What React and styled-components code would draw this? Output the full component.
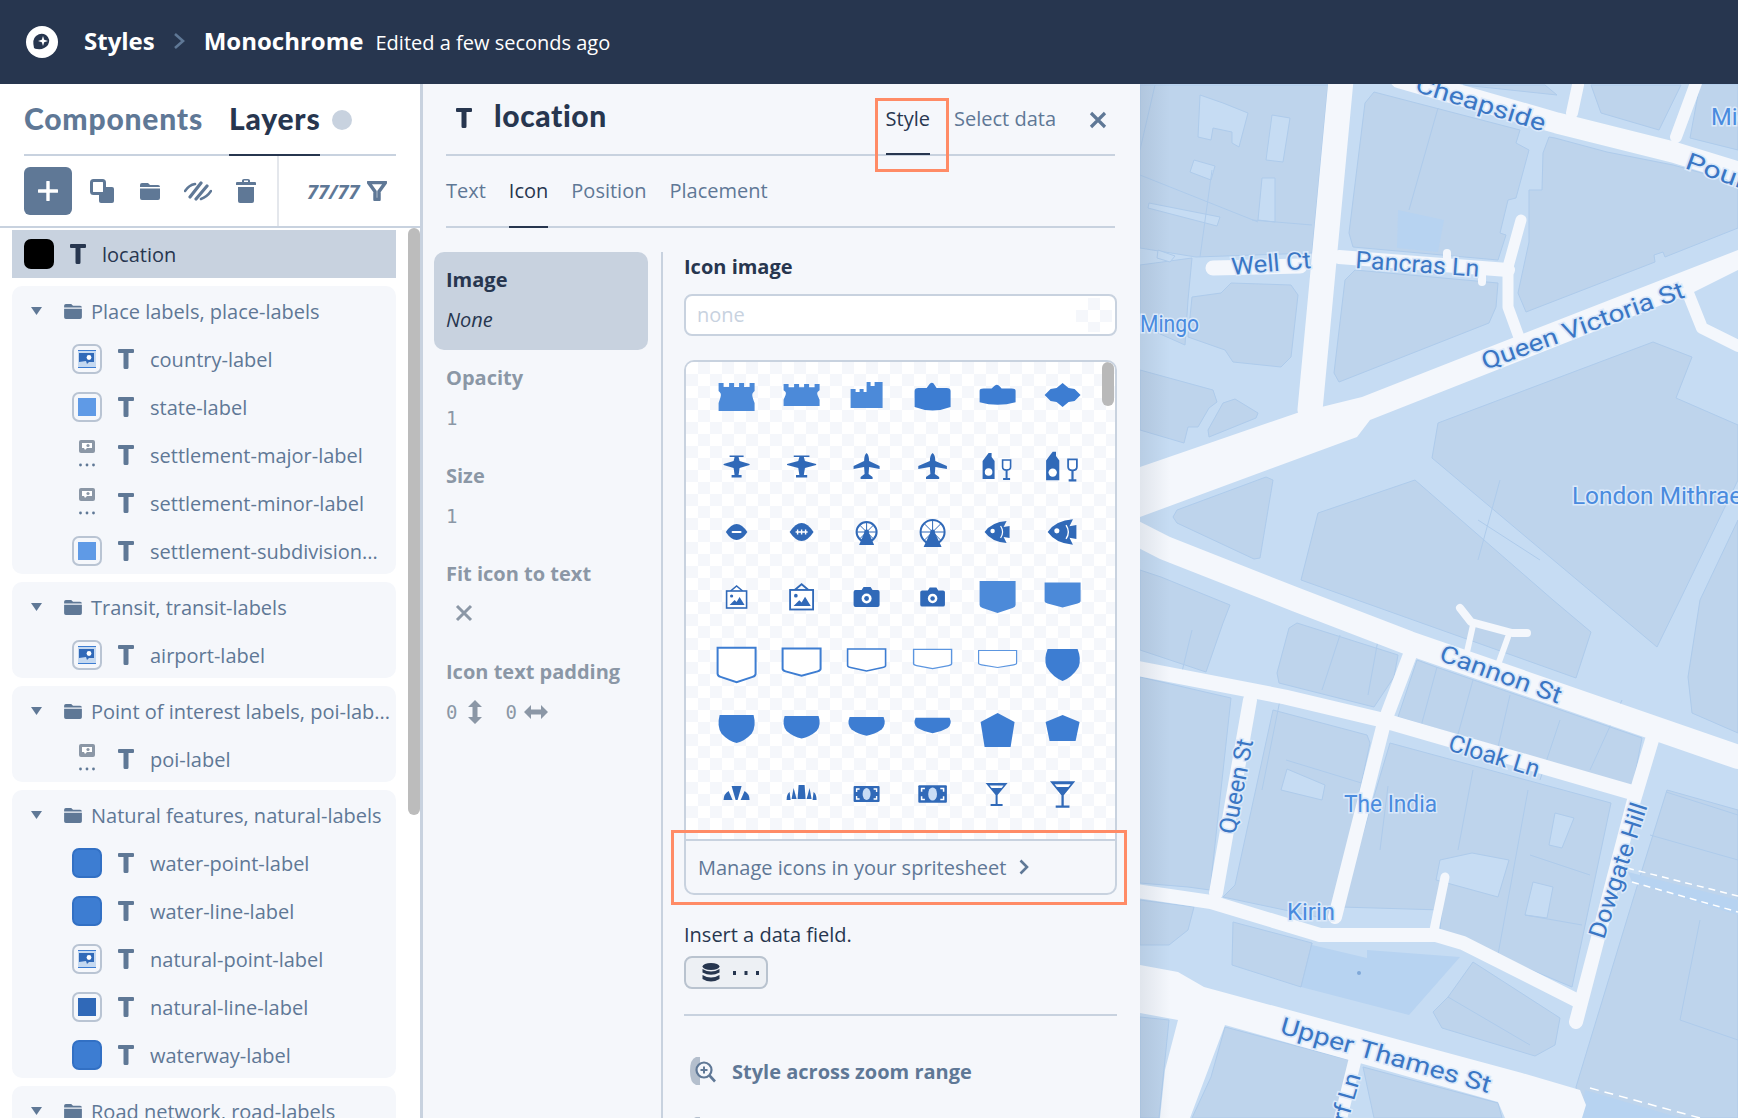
import styled, { createGlobalStyle } from "styled-components";

const GlobalStyle = createGlobalStyle`
  html, body {
    margin: 0;
    padding: 0;
    height: 100%;
    overflow: hidden;
    font-family: "Open Sans", "Liberation Sans", sans-serif;
  }
  * { box-sizing: border-box; }
`;

const NAVY = "#27364f";
const SLATE = "#5f7896";
const LINE = "#c8d2df";
const PANEL = "#f5f7fb";
const GREY = "#8b97a6";
const BLUE = "#3d7dd2";
const DEEP = "#3069b8";
const SOFT = "#4c8ad9";

const Page = styled.div`
  display: flex;
  flex-direction: column;
  width: 1738px;
  height: 1118px;
  overflow: hidden;
`;

const TopBar = styled.header`
  display: flex;
  align-items: center;
  flex: 0 0 84px;
  padding-left: 26px;
  background: ${NAVY};
  color: #fff;
`;

const Crumb = styled.span`
  font-size: 24px;
  font-weight: 700;
  margin-left: ${(p) => p.$left || 0}px;
  margin-bottom: 4px;
`;

const Edited = styled.span`
  font-size: 20px;
  margin-left: 12px;
`;

const Glyph = styled.svg`
  display: block;
  flex: none;
  margin: ${(p) => p.$m || 0};
`;

const Body = styled.div`
  display: flex;
  flex: 1;
  min-height: 0;
`;

const Sidebar = styled.aside`
  position: relative;
  flex: 0 0 423px;
  background: #fff;
  border-right: 3px solid ${LINE};
  overflow: hidden;
`;

const TabRow = styled.div`
  display: flex;
  align-items: center;
  height: 72px;
  margin: 0 24px;
  border-bottom: 2px solid ${LINE};
`;

const BigTab = styled.div`
  display: flex;
  align-items: center;
  height: 72px;
  margin-top: 2px;
  margin-right: ${(p) => p.$gap || 0}px;
  padding-bottom: 3px;
  font-family: "Lato", sans-serif;
  font-size: 30px;
  font-weight: 900;
  letter-spacing: 0.8px;
  color: ${(p) => (p.$active ? NAVY : SLATE)};
  border-bottom: 2px solid ${(p) => (p.$active ? NAVY : "transparent")};
`;

const Dot = styled.span`
  width: 20px;
  height: 20px;
  margin: 2px 0 0 12px;
  border-radius: 50%;
  background: ${LINE};
`;

const Toolbar = styled.div`
  display: flex;
  align-items: center;
  height: 72px;
  border-bottom: 2px solid ${LINE};
`;

const AddButton = styled.div`
  display: flex;
  align-items: center;
  justify-content: center;
  width: 48px;
  height: 48px;
  margin: 0 18px 0 24px;
  border-radius: 6px;
  background: ${SLATE};
`;

const Count = styled.div`
  display: flex;
  align-items: center;
  gap: 8px;
  height: 70px;
  margin-left: 21px;
  padding-left: 28px;
  border-left: 2px solid #e4e7ec;
  font-size: 20px;
  font-weight: 700;
  font-style: italic;
  color: ${SLATE};
`;

const LayerList = styled.div`
  display: flex;
  flex-direction: column;
  gap: 8px;
  width: 384px;
  margin: 2px 0 0 12px;
`;

const SelectedRow = styled.div`
  display: flex;
  align-items: center;
  height: 48px;
  padding-left: 12px;
  background: ${LINE};
  color: ${NAVY};
  font-size: 20px;
`;

const Group = styled.section`
  border-radius: 10px;
  background: ${PANEL};
`;

const GroupHead = styled.div`
  display: flex;
  align-items: center;
  height: 48px;
  padding: 2px 0 0 19px;
  font-size: 20px;
  color: ${SLATE};
  white-space: nowrap;
`;

const Row = styled.div`
  display: flex;
  align-items: center;
  height: 48px;
  padding: 2px 0 0 60px;
  font-size: 20px;
  color: ${SLATE};
  white-space: nowrap;
`;

const SwatchBox = styled.div`
  display: flex;
  align-items: center;
  justify-content: center;
  flex: none;
  width: 30px;
  height: 30px;
  border-radius: 7px;
  border: 2px solid ${(p) => p.$line};
  background: ${(p) => p.$fill};
`;

const SwatchInner = styled.div`
  width: 18px;
  height: 18px;
  background: ${(p) => p.$fill};
`;

const Scroll = styled.div`
  position: absolute;
  left: 408px;
  top: 144px;
  width: 12px;
  height: 587px;
  border-radius: 6px;
  background: #bcbcbc;
`;

const Panel = styled.main`
  position: relative;
  flex: 0 0 717px;
  background: ${PANEL};
  overflow: hidden;
`;

const PanelHead = styled.div`
  display: flex;
  align-items: center;
  height: 72px;
  margin: 0 25px 0 23px;
  border-bottom: 2px solid ${LINE};
`;

const LayerName = styled.div`
  flex: 1;
  margin: -8px 0 0 22px;
  font-family: "Lato", sans-serif;
  font-size: 30px;
  font-weight: 900;
  letter-spacing: 0.6px;
  color: ${NAVY};
`;

const HeadTab = styled.div`
  display: flex;
  align-items: center;
  height: 70px;
  margin: 2px ${(p) => p.$gap}px 0 0;
  font-size: 20px;
  padding-bottom: 2px;
  color: ${(p) => (p.$active ? NAVY : SLATE)};
  border-bottom: 2px solid ${(p) => (p.$active ? NAVY : "transparent")};
`;

const SubTabs = styled.div`
  display: flex;
  gap: 23px;
  height: 72px;
  margin: 0 25px 0 23px;
  border-bottom: 2px solid ${LINE};
`;

const SubTab = styled.div`
  display: flex;
  align-items: center;
  height: 72px;
  padding-bottom: 2px;
  font-size: 20px;
  color: ${(p) => (p.$active ? NAVY : SLATE)};
  border-bottom: 2px solid ${(p) => (p.$active ? NAVY : "transparent")};
`;

const Columns = styled.div`
  display: flex;
  margin-top: 24px;
`;

const Props = styled.div`
  flex: 0 0 214px;
  margin: 0 13px 0 11px;
`;

const Prop = styled.div`
  height: 98px;
  padding: 14px 12px 0;
  border-radius: 10px;
  background: ${(p) => (p.$active ? LINE : "transparent")};
  color: ${(p) => (p.$active ? NAVY : GREY)};
`;

const PropName = styled.div`
  font-size: 20px;
  font-weight: 700;
  line-height: 27px;
  margin-bottom: 13px;
  white-space: nowrap;
`;

const PropValue = styled.div`
  display: flex;
  align-items: center;
  height: 27px;
  font-family: ${(p) => (p.$italic ? `"Open Sans", sans-serif` : `"DejaVu Sans Mono", monospace`)};
  font-size: ${(p) => (p.$italic ? 20 : 19)}px;
  font-style: ${(p) => (p.$italic ? "italic" : "normal")};
`;

const Editor = styled.div`
  flex: 1;
  height: 900px;
  padding: 0 23px 0 21px;
  border-left: 2px solid ${LINE};
`;

const EditorTitle = styled.div`
  font-size: 20px;
  font-weight: 700;
  line-height: 30px;
  color: ${NAVY};
`;

const Field = styled.div`
  position: relative;
  height: 42px;
  margin-top: 12px;
  padding-left: 11px;
  border: 2px solid ${LINE};
  border-radius: 8px;
  background: #fff;
  font-size: 20px;
  line-height: 38px;
  color: ${LINE};
`;

const Checker = styled.div`
  position: absolute;
  right: 3px;
  top: 2px;
  width: 36px;
  height: 34px;
  background: repeating-conic-gradient(${PANEL} 0 25%, #fff 0 50%) 0 0 / 24px 24px;
`;

const Sprites = styled.div`
  position: relative;
  height: 535px;
  margin-top: 24px;
  border: 2px solid ${LINE};
  border-radius: 10px;
  overflow: hidden;
`;

const SpriteGrid = styled.div`
  display: grid;
  grid-template-columns: repeat(6, 65.2px);
  grid-auto-rows: 66px;
  align-content: start;
  height: 477px;
  padding: 5px 0 0 18px;
  background: repeating-conic-gradient(${PANEL} 0 25%, #fff 0 50%) 0 0 / 24px 24px;
`;

const SpriteThumb = styled.div`
  position: absolute;
  right: 1px;
  top: 0;
  width: 12px;
  height: 44px;
  border-radius: 6px;
  background: #b9b9b9;
`;

const Manage = styled.div`
  display: flex;
  align-items: center;
  gap: 13px;
  height: 54px;
  padding-left: 12px;
  border-top: 2px solid ${LINE};
  font-size: 20px;
  color: ${SLATE};
`;

const Hint = styled.div`
  margin-top: 26px;
  font-size: 20px;
  line-height: 28px;
  color: ${NAVY};
`;

const DataButton = styled.div`
  display: flex;
  align-items: center;
  gap: 12px;
  width: 84px;
  height: 33px;
  margin-top: 7px;
  padding-left: 16px;
  border: 2px solid #b9c3cf;
  border-radius: 8px;
  background: #edf0f4;
`;

const Rule = styled.div`
  height: 2px;
  margin-top: 25px;
  background: ${LINE};
`;

const ZoomRow = styled.div`
  display: flex;
  align-items: center;
  gap: 16px;
  height: 30px;
  margin-top: ${(p) => p.$top}px;
  padding-left: 6px;
  font-size: 20px;
  font-weight: 700;
  color: ${SLATE};
`;

const Highlight = styled.div`
  position: absolute;
  left: ${(p) => p.$x}px;
  top: ${(p) => p.$y}px;
  width: ${(p) => p.$w}px;
  height: ${(p) => p.$h}px;
  border: 3px solid #ff8b66;
`;

const MapCanvas = styled.svg`
  display: block;
  flex: 1;
  height: 1034px;
  background: #c6dcf3;
`;

const MapLabel = styled.text`
  font-family: "Roboto", "Liberation Sans", sans-serif;
  font-size: 24px;
  fill: ${(p) => (p.$poi ? "#4a8bde" : "#3a76c4")};
  stroke: #dbe9fa;
  stroke-width: 3px;
  paint-order: stroke;
`;

const Logo = () => (
  <svg width="32" height="32" viewBox="0 0 32 32">
    <circle cx="16" cy="16" r="16" fill="#fff" />
    <path d="M8 22 Q6 13 10 10 Q15 6 20 9 Q25 13 22 19 Q18 24 11 23 Q9 23 8 22Z" fill={NAVY} />
    <path d="M17 10 L18.2 13.8 L22 15 L18.2 16.2 L17 20 L15.8 16.2 L12 15 L15.8 13.8Z" fill="#fff" />
  </svg>
);

const Folder = () => (
  <Glyph $m="0 9px 0 22px" width="18" height="16" viewBox="0 0 20 18">
    <path d="M0 3 Q0 1 2 1 H8 L10 3 H18 Q20 3 20 5 H0Z M0 6.5 H20 V16 Q20 18 18 18 H2 Q0 18 0 16Z" fill={SLATE} />
  </Glyph>
);

const Caret = () => (
  <svg width="11" height="8" viewBox="0 0 11 8">
    <path d="M0 0 H11 L5.5 8Z" fill={SLATE} />
  </svg>
);

const tPath = "M1 0 H15 Q16 0 16 1 V3 Q16 4 15 4 H10.5 V18.5 Q10.5 20 9 20 H7 Q5.5 20 5.5 18.5 V4 H1 Q0 4 0 3 V1 Q0 0 1 0Z";

const T = ({ color = SLATE }) => (
  <Glyph $m="0 16px" width="16" height="20" viewBox="0 0 16 20">
    <path d={tPath} fill={color} />
  </Glyph>
);

const Swatch = ({ kind }) => {
  if (kind === "solid") return <SwatchBox $line="#3270c4" $fill={BLUE} />;
  if (kind === "black") return <SwatchBox $line="#000" $fill="#000" />;
  if (kind === "light") return <SwatchBox $line="#b9c4d3" $fill={PANEL}><SwatchInner $fill="#5f9ae6" /></SwatchBox>;
  if (kind === "dark") return <SwatchBox $line="#b9c4d3" $fill={PANEL}><SwatchInner $fill={DEEP} /></SwatchBox>;
  if (kind === "pic") {
    return (
      <SwatchBox $line="#b9c4d3" $fill={PANEL}>
        <svg width="18" height="18" viewBox="0 0 18 18">
          <rect width="18" height="18" fill="#c5d9f1" />
          <path d="M0 .5H18M0 17.5H18" stroke="#3d7dd2" />
          <path d="M1 3 H16 V12 H11 L9 14 L8 11 L1 12Z" fill={DEEP} />
          <circle cx="11" cy="7.5" r="2.4" fill="#fff" />
        </svg>
      </SwatchBox>
    );
  }
  return (
    <svg width="30" height="30" viewBox="0 0 30 30">
      <rect x="7" y="0" width="16" height="13" rx="2" fill={GREY} />
      <path d="M10 3 H20 V8 H15 L13 10 L12 8 H10Z" fill="#fff" />
      <circle cx="16" cy="5.5" r="1.6" fill={GREY} />
      <circle cx="8.5" cy="25" r="1.4" fill={SLATE} />
      <circle cx="15" cy="25" r="1.4" fill={SLATE} />
      <circle cx="21.5" cy="25" r="1.4" fill={SLATE} />
    </svg>
  );
};

const groups = [
  {
    name: "Place labels, place-labels",
    rows: [
      ["pic", "country-label"],
      ["light", "state-label"],
      ["ghost", "settlement-major-label"],
      ["ghost", "settlement-minor-label"],
      ["light", "settlement-subdivision..."],
    ],
  },
  { name: "Transit, transit-labels", rows: [["pic", "airport-label"]] },
  { name: "Point of interest labels, poi-lab...", rows: [["ghost", "poi-label"]] },
  {
    name: "Natural features, natural-labels",
    rows: [
      ["solid", "water-point-label"],
      ["solid", "water-line-label"],
      ["pic", "natural-point-label"],
      ["dark", "natural-line-label"],
      ["solid", "waterway-label"],
    ],
  },
  { name: "Road network, road-labels", rows: [] },
];

const castle = "M-18-14h5v4h5.5v-4h5v4h5v-4h5v4h5.5v-4h5V-6C14-3 16 0 18 6V14H-18V6C-16 0-14-3-18-6Z";
const tower = "M-16-6h5v3h4v-3h4v3h3V-13h4v4h4v-4h8V13H-16Z";
const banner = "M-18-6Q-18-9-14-9H-6L-3-13Q0-16 2-12L4-9H14Q18-9 18-6V10Q0 17-18 10Z";
const lozenge = "M-18 0L-12-6-6-7 0-12 6-7 12-6 18 0 12 6 6 7 0 12-6 7-12 6Z";
const oldPlane = "M-13-2L-3-5-2-9H-7V-10.5H7V-9H2L3-5 13-2V-1L3 2 2 9H5V11.5H-5V9H-2L-3 2-13-1Z";
const jet = "M0-13Q2.5-11 2.5-5L13 0V3L2.5 1 2 8 6 11V13H-6V11L-2 8-2.5 1-13 3V0L-2.5-5Q-2.5-11 0-13Z";
const ball = "M-12 0Q-6-9 0-9 6-9 12 0 6 9 0 9-6 9-12 0Z";
const fish = "M-13 0Q-6-10 9-11L6-5 12-6V6L6 5 9 11Q-6 10-13 0Z";
const shield = "M-18-16H18V8Q18 10 15 11L0 16-15 11Q-18 10-18 8Z";
const round = "M-15-16H15Q19-6 16 2 10 12 0 16-10 12-16 2-19-6-15-16Z";
const wide = "M-17-16H17Q20-4 15 4 8 12 0 14-8 12-15 4-20-4-17-16Z";
const pent = "M0-17L17-8 13 17H-13L-17-8Z";

const Shape = ({ d, c = BLUE, s = 1, y = 1, dy = 0 }) => (
  <g transform={`translate(0 ${dy}) scale(${s} ${y})`}>
    <path d={d} fill={c} />
  </g>
);

const Lips = () => (
  <g>
    <path d={ball} fill={DEEP} transform="scale(.9)" />
    <rect x="-5" y="-1" width="10" height="2" rx="1" fill="#fff" />
  </g>
);

const Football = () => (
  <g>
    <path d={ball} fill={DEEP} />
    <path d="M-6 0H6M-4-2.5V2.5M0-2.5V2.5M4-2.5V2.5" stroke="#fff" strokeWidth="1.4" />
  </g>
);

const Bottle = ({ s = 1 }) => (
  <g transform={`scale(${s}) translate(3 1)`}>
    <path d="M-12-14h3v4l3 4v18h-12V-6l3-4Z" fill={DEEP} />
    <circle cx="-12" cy="5" r="3.8" fill="#fff" />
    <path d="M2-7h8v7q0 3-4 3t-4-3Z" fill="none" stroke={DEEP} strokeWidth="1.6" />
    <path d="M6 3V12M2.500 12H9.500" stroke={DEEP} strokeWidth="2" />
  </g>
);

const Wheel = ({ r = 10 }) => (
  <g>
    <circle r={r} fill="#fff" stroke={DEEP} strokeWidth="2" />
    <path d={`M0 ${-r}V${r}M${-r} 0H${r}M${-r * 0.7} ${-r * 0.7}L${r * 0.7} ${r * 0.7}M${r * 0.7} ${-r * 0.7}L${-r * 0.7} ${r * 0.7}`} stroke={DEEP} strokeWidth="1" />
    <circle r="2.4" fill={DEEP} />
    <path d={`M-2 0L${-r * 0.75} ${r + 3}H${r * 0.75}L2 0Z`} fill={DEEP} />
  </g>
);

const Fish = ({ s = 1 }) => (
  <g transform={`scale(${s})`}>
    <path d={fish} fill={DEEP} />
    <circle cx="-5" cy="-1" r="2.2" fill="#fff" />
    <path d="M3-6Q7 0 3 6" fill="none" stroke="#fff" strokeWidth="1.2" />
  </g>
);

const Frame = ({ s = 1 }) => (
  <g transform={`scale(${s})`}>
    <path d="M-6-7L0-12 6-7" fill="none" stroke={DEEP} strokeWidth="1.6" />
    <rect x="-10" y="-7" width="20" height="17" fill="#fff" stroke={DEEP} strokeWidth="1.6" />
    <circle cx="-5" cy="-2" r="1.6" fill={DEEP} />
    <path d="M-7 7L-2 2 0 4 3-1 8 7Z" fill={DEEP} />
  </g>
);

const Camera = ({ s = 1 }) => (
  <g transform={`scale(${s})`}>
    <path d="M-13-6Q-13-8-11-8H-5L-3-11H4L6-8H11Q13-8 13-6V7Q13 9 11 9H-11Q-13 9-13 7Z" fill={DEEP} />
    <circle cy="0.5" r="5" fill="#fff" />
    <circle cy="0.5" r="2.4" fill={DEEP} />
  </g>
);

const Outline = ({ y, w = 2 }) => (
  <path
    d={`M-19 ${-16 * y}H19V${8 * y}Q19 ${10 * y} 16 ${11 * y}L0 ${16 * y}-16 ${11 * y}Q-19 ${10 * y}-19 ${8 * y}Z`}
    fill="#fff"
    stroke={w > 1.5 ? BLUE : "#5c96e0"}
    strokeWidth={w}
  />
);

const Croissant = ({ n }) => (
  <g fill={DEEP}>
    {n === 3 ? (
      <>
        <path d="M-5-8H5L1 6H-1Z" />
        <path d="M-8-3L-4 6H-13Q-13 0-8-3Z" />
        <path d="M8-3L4 6H13Q13 0 8-3Z" />
      </>
    ) : (
      <>
        <path d="M-3-9H3L4 5H-4Z" />
        <path d="M-8-6L-5 5H-10Z" />
        <path d="M8-6L5 5H10Z" />
        <path d="M-12-2L-11 6H-15Q-15 0-12-2Z" />
        <path d="M12-2L11 6H15Q15 0 12-2Z" />
      </>
    )}
  </g>
);

const Money = ({ s = 1 }) => (
  <g transform={`scale(${s})`}>
    <rect x="-13" y="-8" width="26" height="16" rx="1" fill={DEEP} />
    <ellipse rx="4" ry="6" fill="#c8dcf5" />
    <path d="M-10-2V-5H-7M10-2V-5H7M-10 2V5H-7M10 2V5H7" fill="none" stroke="#fff" strokeWidth="1.4" />
  </g>
);

const Martini = ({ s = 1 }) => (
  <g transform={`scale(${s})`} fill={DEEP}>
    <path d="M-11-11H11L1 1V10H6V12H-6V10H-1V1ZM-7-8.5L-5-6H5L7-8.5Z" fillRule="evenodd" />
  </g>
);

const sprites = [
  <Shape d={castle} c={SOFT} dy={-3} />,
  <Shape d={castle} c={SOFT} y={0.78} dy={-5} />,
  <Shape d={tower} c={SOFT} dy={-5} />,
  <Shape d={banner} dy={-3} />,
  <Shape d={banner} y={0.72} dy={-5} />,
  <Shape d={lozenge} c={BLUE} dy={-5} />,
  <Shape d={oldPlane} c={DEEP} />,
  <Shape d={oldPlane} c={DEEP} s={1.12} />,
  <Shape d={jet} c={DEEP} />,
  <Shape d={jet} c={DEEP} s={1.1} />,
  <Bottle />,
  <Bottle s={1.1} />,
  <Lips />,
  <Football />,
  <Wheel />,
  <Wheel r={12} />,
  <Fish />,
  <Fish s={1.15} />,
  <Frame />,
  <Frame s={1.15} />,
  <Camera />,
  <Camera s={0.95} />,
  <Shape d={shield} c={SOFT} dy={-1} />,
  <Shape d={shield} c={SOFT} y={0.78} dy={-3} />,
  <g transform="translate(0 1)"><Outline y={1.08} /></g>,
  <g transform="translate(0 -2)"><Outline y={0.85} /></g>,
  <g transform="translate(0 -4)"><Outline y={0.69} w={1.6} /></g>,
  <g transform="translate(0 -5)"><Outline y={0.6} w={1.4} /></g>,
  <g transform="translate(0 -5)"><Outline y={0.53} w={1.2} /></g>,
  <Shape d={round} dy={1} />,
  <Shape d={wide} y={0.93} dy={0} />,
  <Shape d={wide} y={0.75} dy={-2} />,
  <Shape d={wide} y={0.62} dy={-3} />,
  <Shape d={wide} y={0.52} dy={-4} />,
  <Shape d={pent} dy={0} />,
  <Shape d={pent} y={0.76} dy={-2} />,
  <g transform="translate(0 -2)"><Croissant n={3} /></g>,
  <g transform="translate(0 -2)"><Croissant n={5} /></g>,
  <g transform="translate(0 -2)"><Money /></g>,
  <g transform="translate(0 -2)"><Money s={1.1} /></g>,
  <g transform="translate(-1 -2)"><Martini /></g>,
  <g transform="translate(0 -2)"><Martini s={1.15} /></g>,
];

const buildings = [
  "1374,92 1520,130 1516,143 1529,150 1516,198 1508,200 1500,233 1506,235 1498,260 1353,247 1349,233 1365,103",
  "1543,153 1542,190 1529,190 1529,242 1518,293 1526,312 1655,262 1654,255 1663,252 1665,257 1738,228 1738,183 1673,165 1607,152 1555,138 1549,137",
  "1334,373 1345,280 1355,270 1498,283 1496,307 1489,323 1339,382",
  "1438,423 1653,342 1692,357 1676,398 1738,425 1738,480 1680,600 1657,647 1601,600 1432,458",
  "1738,520 1700,600 1688,677 1692,713 1738,733",
  "1415,480 1553,600 1591,632 1576,678 1301,580 1318,513",
  "1140,85 1328,85 1312,253 1196,257 1140,248",
  "1231,283 1291,285 1298,295 1291,357 1281,367 1233,362 1225,350 1188,337 1192,297 1221,293",
  "1140,370 1213,390 1217,402 1209,408 1198,427 1188,427 1184,443 1140,430",
  "1235,399 1258,413 1256,418 1209,437 1208,430 1223,403",
  "1140,265 1192,258 1188,300 1185,345 1140,325",
  "1266,477 1273,480 1260,558 1254,559 1177,523 1173,517 1177,510",
  "1297,623 1398,655 1394,677 1374,707 1279,683 1277,673 1289,628",
  "1140,570 1161,577 1230,605 1223,623 1206,672 1140,650",
  "1417,660 1436,667 1642,738 1632,790 1619,783 1398,717",
  "1273,710 1367,735 1370,743 1332,920 1223,897 1235,885",
  "1140,677 1231,698 1210,890 1188,887 1140,883",
  "1390,743 1611,803 1572,987 1460,940 1440,930 1442,910 1341,907",
  "1233,922 1312,943 1301,987 1232,965",
  "1473,962 1560,1018 1555,1045 1535,1056 1442,1028 1433,1012 1448,997",
  "1140,900 1194,907 1188,930 1169,945 1140,945",
  "1667,790 1738,810 1738,1118 1580,1118 1576,1087 1642,870",
  "1225,1027 1349,1060 1343,1118 1192,1118 1211,1077",
  "1363,1067 1498,1103 1502,1118 1374,1118",
  "1140,1017 1169,1020 1159,1118 1140,1118",
  "1591,85 1681,85 1659,130 1601,113",
  "1700,84 1738,84 1738,150 1690,138",
  "1463,85 1545,85 1557,95",
];

const courts = [
  "1200,95 1223,103 1248,113 1239,147 1232,143 1232,132 1213,128 1211,140 1198,137",
  "1266,160 1272,115 1290,118 1283,162",
  "1190,172 1194,160 1215,166 1211,180",
  "1149,203 1220,217 1217,226 1148,208",
  "1258,220 1262,178 1275,178 1275,222",
  "1555,813 1574,818 1562,848 1549,845",
  "1533,882 1553,887 1547,918 1525,915",
  "1472,853 1509,860 1498,897 1436,880 1440,860",
  "1287,769 1325,785 1322,800 1281,790",
  "1158,250 1175,256 1170,262 1157,258",
];

const waters = [
  "1398,210 1444,220 1438,252 1397,248",
  "1312,945 1367,958 1367,950 1460,957 1409,1015 1301,987",
  "1628,872 1738,900 1738,915 1632,882",
  "1585,1090 1738,1135 1738,1118 1620,1118 1580,1118",
];

const seams = [
  "1438,108 1409,210",
  "1192,630 1180,680",
  "1280,700 1262,790",
  "1340,635 1322,690",
  "1378,640 1368,695",
  "1437,667 1420,730",
  "1473,680 1455,745",
  "1510,695 1495,760",
  "1560,720 1540,780",
  "1286,760 1368,785",
  "1388,786 1380,850",
  "1473,770 1458,850",
  "1528,790 1497,960",
  "1530,855 1590,875",
  "1525,915 1582,925",
  "1312,943 1301,987",
  "1448,997 1530,1045",
  "1155,85 1140,150",
  "1200,257 1212,170",
  "1140,175 1258,222",
  "1252,220 1312,225",
  "1622,700 1590,770",
  "1500,480 1478,560",
  "1478,520 1540,560",
  "1666,792 1738,815",
  "1650,835 1738,860",
  "1700,920 1680,1020",
  "1680,1020 1738,1040",
];

// x1,y1 x2,y2 ... and stroke width
const roads = [
  ["1400,78 1557,123 1673,152 1738,172", 21],
  ["1341,80 1325,250 1310,410", 25],
  ["1130,530 1165,548 1297,600 1409,643 1738,757", 24],
  ["1130,667 1285,697 1382,720 1634,793", 15],
  ["1411,652 1384,723 1335,917", 14],
  ["1250,700 1216,893", 14],
  ["1130,890 1211,902 1320,935 1436,935 1463,943 1576,1000", 14],
  ["1652,740 1634,800 1576,1022", 14],
  ["1355,1060 1339,1125", 13],
  ["1445,877 1434,930", 9],
  ["1460,608 1471,622 1512,633 1527,633", 8],
  ["1473,625 1467,652", 6],
  ["1508,637 1499,662", 6],
  ["1213,268 1300,266", 15],
  ["1339,257 1508,270", 14],
  ["1521,220 1508,267 1508,307 1520,340", 11],
  ["1447,253 1447,265", 8],
  ["1482,272 1482,282", 8],
  ["1578,85 1572,113", 12],
  ["1696,83 1676,137", 12],
  ["1688,293 1702,328 1738,346", 12],
];

const plazas = [
  "1738,250 1525,333 1362,397 1297,413 1140,467 1140,517 1357,437 1370,420 1692,293 1738,270",
  "1140,965 1178,972 1204,987 1522,1073 1580,1090 1586,1105 1582,1118 1505,1118 1498,1102 1225,1025 1190,1118 1160,1118 1165,1070 1178,1020 1140,1013",
];

const labels = [
  ["Cheapside", 1414, 91, 17.5, 135],
  ["Poultry", 1684, 168, 20, 95],
  ["Midland", 1711, 125, 0, 85, true],
  ["Well Ct", 1232, 275, -5, 80],
  ["Pancras Ln", 1355, 268, 4, 124],
  ["Queen Victoria St", 1485, 370, -20, 214],
  ["Mingo", 1140, 332, 0, 59, true],
  ["London Mithraeum", 1572, 504, 0, 205, true],
  ["Cannon St", 1438, 660, 20, 128],
  ["Cloak Ln", 1447, 750, 17, 94],
  ["Queen St", 1235, 835, -79, 96],
  ["The India", 1344, 812, 0, 93, true],
  ["Kirin", 1287, 920, 0, 48, true],
  ["Dowgate Hill", 1604, 940, -72, 141],
  ["Upper Thames St", 1279, 1033, 16, 218],
];

const CityMap = () => (
  <MapCanvas width="598" height="1034" viewBox="1140 84 598 1034">
    <defs>
      <linearGradient id="edge" x1="0" x2="1" y1="0" y2="0">
        <stop offset="0" stopColor="#5b6b80" stopOpacity="0.13" />
        <stop offset="1" stopColor="#5b6b80" stopOpacity="0" />
      </linearGradient>
    </defs>
    {buildings.map((p) => (
      <polygon key={p} points={p} fill="#bed4ec" stroke="#aecbeb" strokeWidth="1" />
    ))}
    {courts.map((p) => (
      <polygon key={p} points={p} fill="#c6dcf3" stroke="#aecbeb" strokeWidth="1" />
    ))}
    {waters.map((p) => (
      <polygon key={p} points={p} fill="#b7d3f1" />
    ))}
    {seams.map((p) => (
      <polyline key={p} points={p} fill="none" stroke="#aecbeb" strokeWidth="1" />
    ))}
    {plazas.map((p) => (
      <polygon key={p} points={p} fill="#f4f7fc" />
    ))}
    {roads.map(([p, w]) => (
      <polyline key={p} points={p} fill="none" stroke="#f4f7fc" strokeWidth={w} strokeLinecap="round" strokeLinejoin="round" />
    ))}
    <polyline points="1627,868 1738,896" fill="none" stroke="#fff" strokeWidth="1.5" strokeDasharray="7 5" />
    <polyline points="1632,882 1738,912" fill="none" stroke="#fff" strokeWidth="1.5" strokeDasharray="7 5" />
    <polyline points="1590,1088 1700,1118" fill="none" stroke="#fff" strokeWidth="1.5" strokeDasharray="9 6" />
    <circle cx="1359" cy="973" r="2" fill="#7fa8d8" />
    <rect x="1140" y="84" width="30" height="1034" fill="url(#edge)" />
    {labels.map(([text, x, y, angle, len, poi]) => (
      <MapLabel
        key={text}
        $poi={poi}
        x={x}
        y={y}
        textLength={len}
        lengthAdjust="spacingAndGlyphs"
        transform={`rotate(${angle} ${x} ${y})`}
      >
        {text}
      </MapLabel>
    ))}
    <MapLabel x="1361" y="1076" textAnchor="end" transform="rotate(-74 1361 1076)">
      Wharf Ln
    </MapLabel>
  </MapCanvas>
);

export default function App() {
  return (
    <Page>
      <GlobalStyle />
      <TopBar>
        <Logo />
        <Crumb $left={26}>Styles</Crumb>
        <Glyph $m="0 19px 2px 18px" width="12" height="18" viewBox="0 0 12 18">
          <path d="M2 2 L10 9 L2 16" fill="none" stroke={SLATE} strokeWidth="2.6" />
        </Glyph>
        <Crumb>Monochrome</Crumb>
        <Edited>Edited a few seconds ago</Edited>
      </TopBar>
      <Body>
        <Sidebar>
          <TabRow>
            <BigTab $gap={26}>Components</BigTab>
            <BigTab $active>Layers</BigTab>
            <Dot />
          </TabRow>
          <Toolbar>
            <AddButton>
              <svg width="20" height="20" viewBox="0 0 20 20">
                <path d="M10 1V19M1 10H19" stroke="#fff" strokeWidth="3.4" strokeLinecap="round" />
              </svg>
            </AddButton>
            <Glyph $m="0 26px 0 0" width="24" height="24" viewBox="0 0 24 24">
              <path d="M9 8H22Q24 8 24 10V22Q24 24 22 24H11Q9 24 9 22Z" fill={SLATE} />
              <rect x="1.5" y="1.5" width="13" height="13" rx="2" fill="#fff" stroke={SLATE} strokeWidth="3" />
            </Glyph>
            <Glyph $m="0 24px 0 0" width="20" height="20" viewBox="0 0 20 18">
              <path d="M0 3 Q0 1 2 1 H8 L10 3 H18 Q20 3 20 5 H0Z M0 6.5 H20 V16 Q20 18 18 18 H2 Q0 18 0 16Z" fill={SLATE} />
            </Glyph>
            <Glyph $m="0 24px 0 0" width="28" height="20" viewBox="0 0 28 20">
              <path d="M1 10 Q5 4 11 3 M27 10 Q23 16 17 18" fill="none" stroke={SLATE} strokeWidth="2.6" strokeLinecap="round" />
              <path d="M6 16 L17 2 M12 18 L23 5" stroke={SLATE} strokeWidth="3.2" strokeLinecap="round" />
            </Glyph>
            <Glyph width="20" height="24" viewBox="0 0 20 24">
              <path d="M6 3V1.5Q6 0 8 0H12Q14 0 14 1.5V3H19Q20 3 20 4V6H0V4Q0 3 1 3Z M8 1.6V3H12V1.6Z" fill={SLATE} fillRule="evenodd" />
              <path d="M2 8H18V22Q18 24 16 24H4Q2 24 2 22Z" fill={SLATE} />
            </Glyph>
            <Count>
              77/77
              <svg width="20" height="20" viewBox="0 0 20 20">
                <path d="M1.500 1.500H18.500L12 10.500V18.500H8V10.500Z" fill="none" stroke={SLATE} strokeWidth="3.500" strokeLinejoin="round" />
              </svg>
            </Count>
          </Toolbar>
          <LayerList>
            <SelectedRow>
              <Swatch kind="black" />
              <T color={NAVY} />
              location
            </SelectedRow>
            {groups.map((g) => (
              <Group key={g.name}>
                <GroupHead>
                  <Caret />
                  <Folder />
                  {g.name}
                </GroupHead>
                {g.rows.map(([kind, label]) => (
                  <Row key={label}>
                    <Swatch kind={kind} />
                    <T />
                    {label}
                  </Row>
                ))}
              </Group>
            ))}
          </LayerList>
          <Scroll />
        </Sidebar>
        <Panel>
          <PanelHead>
            <Glyph $m="-2px 0 0 10px" width="16" height="20" viewBox="0 0 16 20">
              <path d={tPath} fill={NAVY} />
            </Glyph>
            <LayerName>location</LayerName>
            <HeadTab $active $gap={24}>Style</HeadTab>
            <HeadTab $gap={33}>Select data</HeadTab>
            <Glyph $m="2px 8px 0 0" width="18" height="18" viewBox="0 0 18 18">
              <path d="M2 2 L16 16 M16 2 L2 16" stroke={SLATE} strokeWidth="3.2" />
            </Glyph>
          </PanelHead>
          <SubTabs>
            <SubTab>Text</SubTab>
            <SubTab $active>Icon</SubTab>
            <SubTab>Position</SubTab>
            <SubTab>Placement</SubTab>
          </SubTabs>
          <Columns>
            <Props>
              <Prop $active>
                <PropName>Image</PropName>
                <PropValue $italic>None</PropValue>
              </Prop>
              <Prop>
                <PropName>Opacity</PropName>
                <PropValue>1</PropValue>
              </Prop>
              <Prop>
                <PropName>Size</PropName>
                <PropValue>1</PropValue>
              </Prop>
              <Prop>
                <PropName>Fit icon to text</PropName>
                <PropValue>
                  <Glyph $m="-2px 0 0 9px" width="18" height="18" viewBox="0 0 18 18">
                    <path d="M2 2 L16 16 M16 2 L2 16" stroke={GREY} strokeWidth="3" />
                  </Glyph>
                </PropValue>
              </Prop>
              <Prop>
                <PropName>Icon text padding</PropName>
                <PropValue>
                  0
                  <Glyph $m="0 22px 0 10px" width="16" height="24" viewBox="0 0 16 24">
                    <path d="M8 0 L15 7 H10.5 V17 H15 L8 24 L1 17 H5.5 V7 H1Z" fill={GREY} />
                  </Glyph>
                  0
                  <Glyph $m="0 0 0 7px" width="24" height="16" viewBox="0 0 24 16">
                    <path d="M0 8 L7 1 V5.5 H17 V1 L24 8 L17 15 V10.5 H7 V15Z" fill={GREY} />
                  </Glyph>
                </PropValue>
              </Prop>
            </Props>
            <Editor>
              <EditorTitle>Icon image</EditorTitle>
              <Field>
                none
                <Checker />
              </Field>
              <Sprites>
                <SpriteGrid>
                  {sprites.map((icon, i) => (
                    <Glyph key={i} width="65.2" height="66" viewBox="-32.6 -33 65.2 66">
                      {icon}
                    </Glyph>
                  ))}
                </SpriteGrid>
                <SpriteThumb />
                <Manage>
                  Manage icons in your spritesheet
                  <svg width="10" height="16" viewBox="0 0 10 16">
                    <path d="M1.5 1.5 L8 8 L1.5 14.5" fill="none" stroke={SLATE} strokeWidth="2.6" />
                  </svg>
                </Manage>
              </Sprites>
              <Hint>Insert a data field.</Hint>
              <DataButton>
                <svg width="18" height="20" viewBox="0 0 18 20">
                  <ellipse cx="9" cy="3.5" rx="8.5" ry="3.5" fill={NAVY} />
                  <path d="M.5 6Q9 11 17.5 6V9.5Q9 14 .5 9.5Z M.5 12Q9 17 17.5 12V16Q9 21 .5 16Z" fill={NAVY} />
                </svg>
                <svg width="28" height="4" viewBox="0 0 28 4">
                  <path d="M1 0H4V4H1ZM12.500 0H15.500V4H12.500ZM24 0H27V4H24Z" fill={NAVY} />
                </svg>
              </DataButton>
              <Rule />
              <ZoomRow $top={40}>
                <svg width="26" height="28" viewBox="0 0 26 28">
                  <path d="M6 0 Q0 2 0 14 Q0 26 6 28 H10 V0Z" fill="#b4bfcd" />
                  <circle cx="14" cy="13" r="7.500" fill={PANEL} stroke={SLATE} strokeWidth="2.2" />
                  <path d="M14 9.500V16.500M10.500 13H17.500" stroke={SLATE} strokeWidth="2" />
                  <path d="M19.500 18.500L25 24.500" stroke={SLATE} strokeWidth="2.600" />
                </svg>
                Style across zoom range
              </ZoomRow>
              <ZoomRow $top={30}>
                <svg width="26" height="28" viewBox="0 0 26 28">
                  <path d="M6 0 Q0 2 0 14 Q0 26 6 28 H10 V0Z" fill="#b4bfcd" />
                </svg>
              </ZoomRow>
            </Editor>
          </Columns>
          <Highlight $x={452} $y={14} $w={74} $h={74} />
          <Highlight $x={248} $y={746} $w={456} $h={75} />
        </Panel>
        <CityMap />
      </Body>
    </Page>
  );
}
